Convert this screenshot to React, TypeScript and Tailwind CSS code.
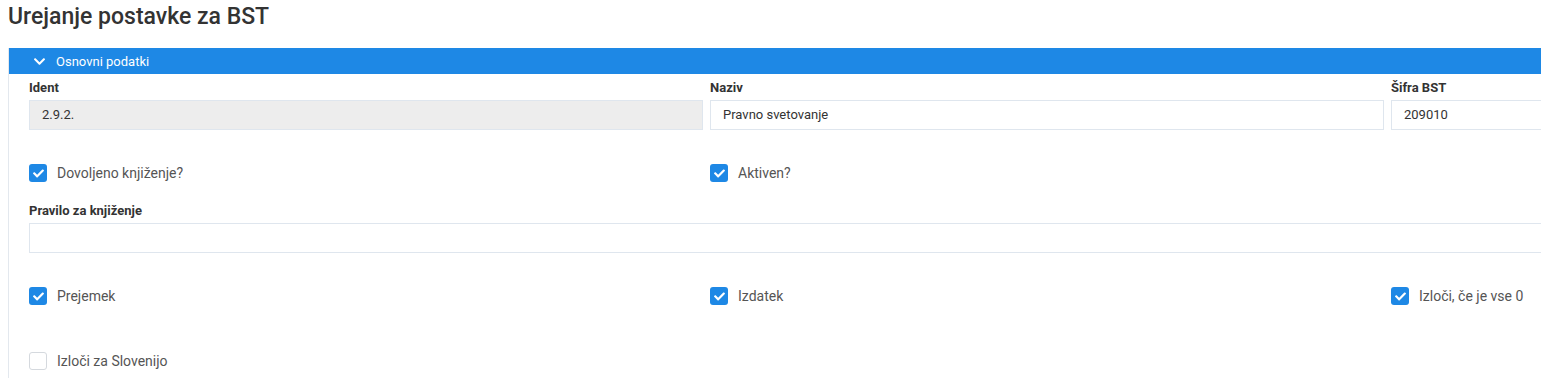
import { FaChevronDown, FaCheck } from 'react-icons/fa';

const Check = ({ checked, label }: { checked: boolean; label: string }) => (
    <label className="flex items-center gap-[10px] h-[18px]">
        {checked ? (
            <span className="flex items-center justify-center w-[18px] h-[18px] rounded-[3px] bg-[#1e88e5] text-white">
                <FaCheck size={11} />
            </span>
        ) : (
            <span className="w-[18px] h-[18px] rounded-[3px] border border-[#d5d9de] bg-white" />
        )}
        <span className="text-[14px] text-[#555] leading-[18px]">{label}</span>
    </label>
);

const Field = ({ label, value, disabled }: { label: string; value: string; disabled?: boolean }) => (
    <div className="flex flex-col">
        <div className="text-[13px] font-bold text-[#333] leading-[16px] mb-[4px]">{label}</div>
        <div
            className={`h-[30px] flex items-center px-[12px] border border-[#dfe6ee] text-[13px] text-[#333] ${
                disabled ? 'bg-[#ededed]' : 'bg-white'
            }`}
        >
            {value}
        </div>
    </div>
);

export default function App() {
    return (
        <div className="w-[1541px] h-[378px] overflow-hidden bg-white px-2 [font-family:Roboto,'Liberation_Sans',sans-serif]">
            <h1 className="pt-[3px] text-[23px] leading-[28px] text-[#333] font-medium">Urejanje postavke za BST</h1>

            <div className="mt-[17px] w-[2100px] border-l border-[#e3e8ee]">
                <div className="h-[26px] bg-[#1e88e5] flex items-center pl-[24px] gap-[10px] text-white">
                    <FaChevronDown size={13} />
                    <span className="text-[13px] leading-none">Osnovni podatki</span>
                </div>

                <div className="pl-[20px] pt-[6px] pb-4">
                    <div className="grid grid-cols-[674px_674px_674px] gap-x-[7px]">
                        <Field label="Ident" value="2.9.2." disabled />
                        <Field label="Naziv" value="Pravno svetovanje" />
                        <Field label="Šifra BST" value="209010" />
                    </div>

                    <div className="grid grid-cols-[674px_674px_674px] gap-x-[7px] mt-[34px]">
                        <Check checked label="Dovoljeno knjiženje?" />
                        <Check checked label="Aktiven?" />
                    </div>

                    <div className="mt-[21px]">
                        <Field label="Pravilo za knjiženje" value="" />
                    </div>

                    <div className="grid grid-cols-[674px_674px_674px] gap-x-[7px] mt-[34px]">
                        <Check checked label="Prejemek" />
                        <Check checked label="Izdatek" />
                        <Check checked label="Izloči, če je vse 0" />
                    </div>

                    <div className="mt-[47px]">
                        <Check checked={false} label="Izloči za Slovenijo" />
                    </div>
                </div>
            </div>
        </div>
    );
}
